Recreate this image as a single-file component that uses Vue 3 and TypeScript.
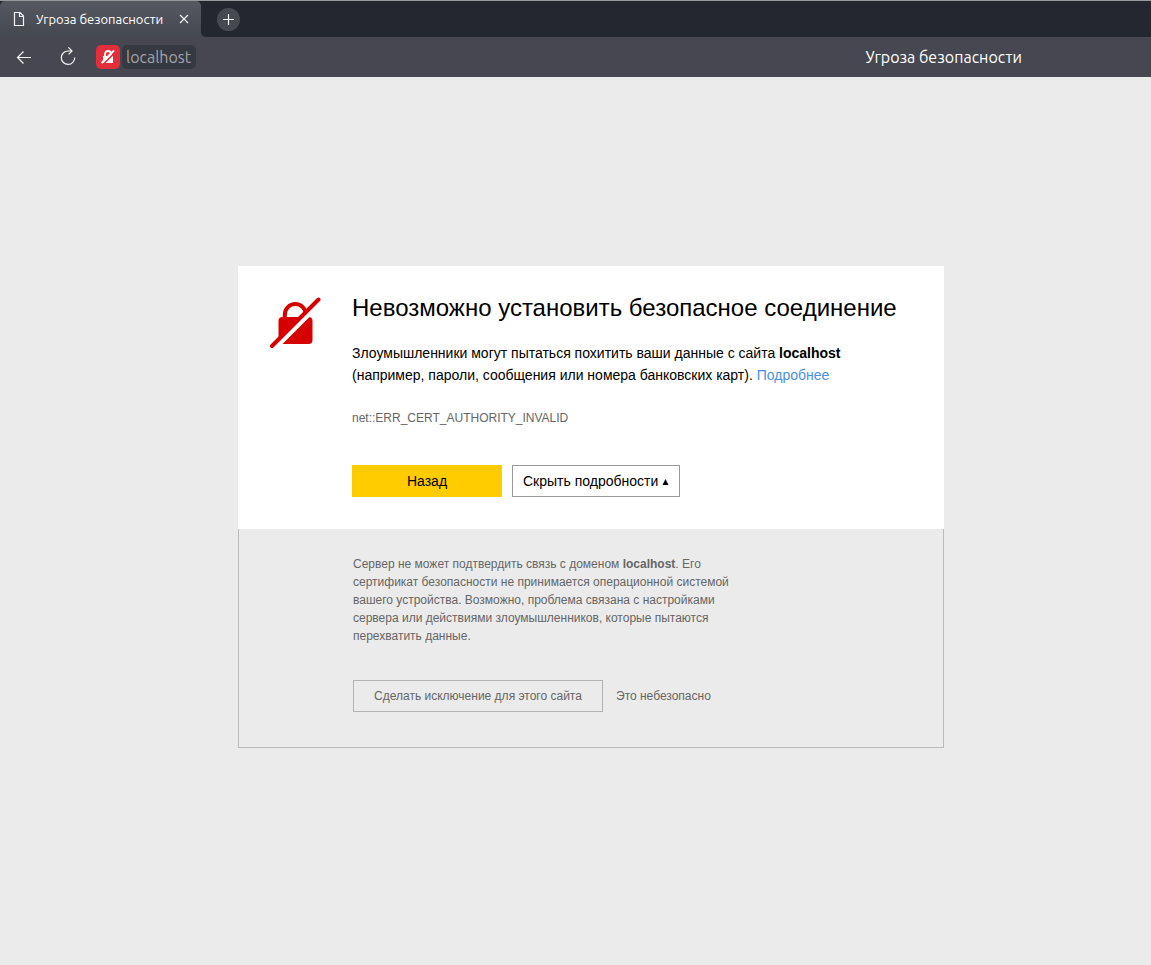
<script setup lang="ts">
import { ref } from 'vue'

const pageTitle = 'Угроза безопасности'
const host = 'localhost'
const detailsOpen = ref(true)
</script>

<template>
  <div class="browser">
    <header>
      <div class="tab-strip">
        <div class="tab">
          <svg class="doc" width="12" height="14" viewBox="0 0 12 14" aria-hidden="true">
            <path d="M1.5 .5H7L10.5 4V13.5H1.5Z M6.5 .5V4.5H10.5" />
          </svg>
          <span class="tab-title">{{ pageTitle }}</span>
          <button class="tab-close" type="button" aria-label="Закрыть вкладку">
            <svg width="10" height="10" viewBox="0 0 10 10"><path d="M1 1L9 9M9 1L1 9" /></svg>
          </button>
        </div>
        <div class="strip-rest">
          <button class="new-tab" type="button" aria-label="Новая вкладка">
            <svg width="11" height="11" viewBox="0 0 11 11"><path d="M5.5 0V11M0 5.5H11" /></svg>
          </button>
        </div>
      </div>
      <nav class="toolbar">
        <button class="nav-button" type="button" aria-label="Назад">
          <svg width="16" height="16" viewBox="0 0 16 16"><path d="M15 8.5H1.5M7.5 2.5L1.5 8.5L7.5 14.5" /></svg>
        </button>
        <button class="nav-button reload" type="button" aria-label="Обновить">
          <svg width="18" height="20" viewBox="0 0 18 20"><path d="M13 4H9A6.7 6.7 0 1 0 15.7 10.5M9.4 .4L13 4L9.6 7.4" /></svg>
        </button>
        <button class="badge" type="button" aria-label="Соединение не защищено">
          <svg width="16" height="16" viewBox="0 0 16 16">
            <path class="solid" d="M3 7H13V14H3Z" />
            <path class="shackle" d="M5 7V5A3 3 0 0 1 11 5V7" />
            <path class="gap" d="M3 15.5L15.5 3" />
            <path class="slash" d="M1.5 14L14 1.5" />
          </svg>
        </button>
        <a class="host" href="#">{{ host }}</a>
        <span class="toolbar-title">{{ pageTitle }}</span>
      </nav>
    </header>

    <main>
      <div class="card">
        <section class="warning">
          <svg class="lock" width="52" height="52" viewBox="0 0 52 52" aria-hidden="true">
            <path class="shackle" d="M15.8 22V17.5A10.5 10.5 0 0 1 36.8 17.5V22" />
            <rect class="solid" x="9.5" y="20" width="34" height="27" rx="4" />
            <path class="gap" d="M4 53L53 4" />
            <path class="slash" d="M3 49L49.5 2.5" />
          </svg>
          <div class="warning-body">
            <h1>Невозможно установить безопасное соединение</h1>
            <p class="lead">
              Злоумышленники могут пытаться похитить ваши данные с сайта <b>{{ host }}</b><br>
              (например, пароли, сообщения или номера банковских карт). <a href="#">Подробнее</a>
            </p>
            <p class="code">net::ERR_CERT_AUTHORITY_INVALID</p>
            <div class="actions">
              <button class="primary" type="button">Назад</button>
              <button class="secondary" type="button" :aria-expanded="detailsOpen" @click="detailsOpen = !detailsOpen">
                {{ detailsOpen ? 'Скрыть подробности' : 'Подробности' }}
                <svg width="7" height="6" viewBox="0 0 7 6" :class="{ flipped: !detailsOpen }"><path d="M3.5 0L6.5 6H.5Z" /></svg>
              </button>
            </div>
          </div>
        </section>
        <section v-if="detailsOpen" class="details">
          <p>
            Сервер не может подтвердить связь с доменом <b>{{ host }}</b>. Его<br>
            сертификат безопасности не принимается операционной системой
            вашего устройства. Возможно, проблема связана с настройками
            сервера или действиями злоумышленников, которые пытаются перехватить данные.
          </p>
          <div class="exception">
            <button type="button">Сделать исключение для этого сайта</button>
            <span>Это небезопасно</span>
          </div>
        </section>
      </div>
    </main>
  </div>
</template>

<style>
body {
  margin: 0;
  background: #ebebeb;
}
</style>

<style scoped>
.browser {
  display: flex;
  flex-direction: column;
  min-height: 100vh;
  font-family: "Liberation Sans", Arial, sans-serif;
}

button {
  margin: 0;
  padding: 0;
  border: 0;
  background: none;
  font: inherit;
  color: inherit;
  cursor: pointer;
}

h1,
p {
  margin: 0;
}

header {
  font-family: Ubuntu, "Noto Sans", sans-serif;
  color: #ffffff;
}

header svg {
  display: block;
  fill: none;
  stroke: #f4f4f6;
  stroke-width: 1.2;
}

.tab-strip {
  display: flex;
  align-items: stretch;
  height: 36px;
  border-top: 1px solid #969a9f;
  background: linear-gradient(#242730 50%, #464850 50%);
}

.tab {
  display: flex;
  align-items: center;
  box-sizing: border-box;
  width: 201px;
  padding: 0 12px 0 13px;
  border-radius: 5px 5px 0 0;
  background: linear-gradient(#565862, #464850);
  font-size: 13px;
}

.tab-title {
  flex: 1;
  margin-left: 11px;
  white-space: nowrap;
}

.strip-rest {
  flex: 1;
  display: flex;
  align-items: center;
  padding-left: 16px;
  border-bottom-left-radius: 5px;
  background: #242730;
}

.new-tab {
  display: grid;
  place-items: center;
  width: 23px;
  height: 23px;
  border-radius: 50%;
  background: #464951;
}

.toolbar {
  display: flex;
  align-items: center;
  box-sizing: border-box;
  height: 40px;
  padding: 0 129px 0 16px;
  background: #464750;
  font-size: 16px;
}

.reload {
  margin-left: 27px;
}

.badge {
  display: grid;
  place-items: center;
  width: 24px;
  height: 24px;
  margin-left: 19px;
  border-radius: 5px;
  background: #e22f39;
}

.badge .solid {
  fill: #ffffff;
  stroke: none;
}

.badge .shackle {
  stroke: #ffffff;
  stroke-width: 1.8;
}

.badge .gap {
  stroke: #e22f39;
  stroke-width: 1.6;
}

.badge .slash {
  stroke: #ffffff;
  stroke-width: 1.8;
}

.host {
  margin-left: 2px;
  padding: 0 5px 0 4px;
  border-radius: 5px;
  background: #373942;
  color: #a0a2a8;
  line-height: 24px;
  text-decoration: none;
}

.toolbar-title {
  margin-left: auto;
  white-space: nowrap;
}

main {
  flex: 1;
  display: flex;
  align-items: center;
  justify-content: center;
  padding: 0 0 28px 31px;
}

.card {
  width: 706px;
}

.warning {
  display: flex;
  gap: 31px;
  padding: 24px 32px 32px 31px;
  background: #ffffff;
  color: #000000;
}

.lock {
  flex: none;
  margin-top: 7px;
}

.lock .shackle {
  fill: none;
  stroke: #d60000;
  stroke-width: 4;
}

.lock .solid {
  fill: #d60000;
}

.lock .gap {
  stroke: #ffffff;
  stroke-width: 5;
}

.lock .slash {
  stroke: #d60000;
  stroke-width: 4;
  stroke-linecap: round;
}

h1 {
  font-size: 24px;
  font-weight: 400;
  line-height: 36px;
  white-space: nowrap;
}

.lead {
  margin-top: 16px;
  font-size: 14px;
  line-height: 22px;
}

.lead a {
  color: #4a90e2;
  text-decoration: none;
}

.code {
  margin-top: 23px;
  color: #666666;
  font-size: 12px;
  line-height: 18px;
}

.actions {
  display: flex;
  gap: 10px;
  margin-top: 38px;
  font-size: 14px;
}

.actions button {
  height: 32px;
}

.primary {
  width: 150px;
  background: #ffcc00;
}

.secondary {
  padding: 0 10px;
  border: 1px solid #999999;
}

.secondary svg {
  vertical-align: 1px;
}

.secondary .flipped {
  transform: rotate(180deg);
}

.details {
  padding: 26px 114px 35px;
  border: 1px solid #bbbbbb;
  border-top: 0;
  color: #666666;
  font-size: 12px;
  line-height: 18px;
}

.details p {
  max-width: 380px;
}

.exception {
  display: flex;
  align-items: center;
  gap: 13px;
  margin-top: 35px;
}

.exception button {
  width: 250px;
  height: 32px;
  border: 1px solid #b3b3b3;
}
</style>
